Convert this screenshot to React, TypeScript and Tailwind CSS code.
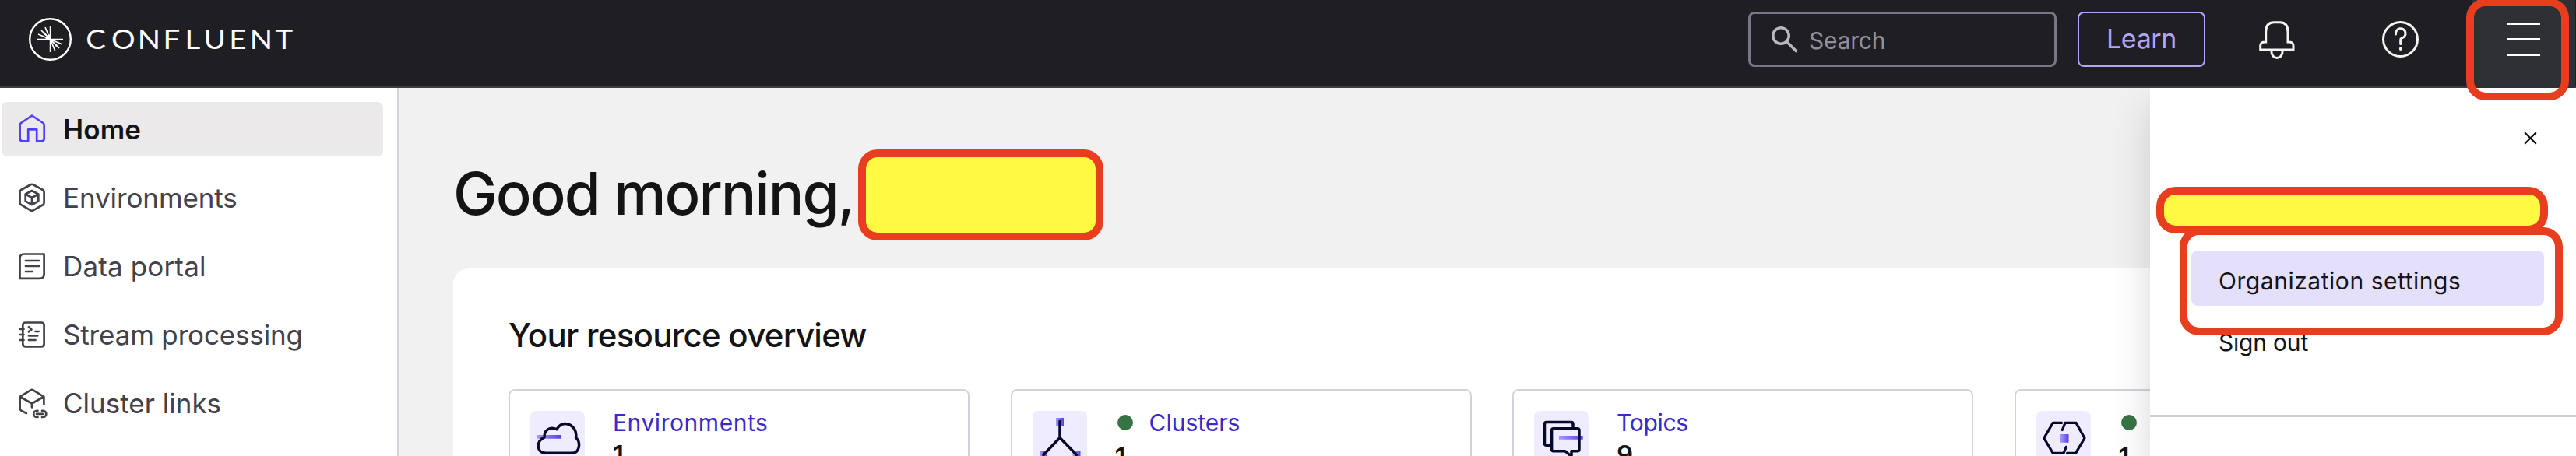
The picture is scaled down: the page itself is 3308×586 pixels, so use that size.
import React from "react";

function NavIcon({ children }: { children: React.ReactNode }) {
  return (
    <svg className="shrink-0" width="40" height="40" viewBox="0 0 40 40" fill="none" stroke="currentColor" strokeWidth="2.7" strokeLinecap="round" strokeLinejoin="round">
      {children}
    </svg>
  );
}

const nav = [
  {
    label: "Environments",
    track: "-mt-px tracking-[-0.1px]",
    icon: (
      <>
        <path d="M18.3 3.2Q20 2.3 21.7 3.2L34 10Q35.6 11 35.6 12.8V26.5Q35.6 28.3 34 29.2L21.7 36.3Q20 37.3 18.3 36.3L6.1 29.2Q4.5 28.3 4.5 26.5V12.8Q4.5 11 6.1 10Z" />
        <path d="M20 11L28.3 15.5V24.5L20 29L11.7 24.5V15.5ZM11.7 15.5L20 20L28.3 15.5M20 20V29" />
      </>
    ),
  },
  {
    label: "Data portal",
    track: "-mt-px tracking-[0.15px]",
    icon: <path d="M4.5 36V10Q4.5 4.5 10 4.5H35.6V30.5Q35.6 35.8 30.3 35.8H4.5M12 13H29M12 20H29M12 27H20.5" />,
  },
  {
    label: "Stream processing",
    track: "-mt-px tracking-[-0.15px]",
    icon: (
      <path d="M12 4.5H32Q35.6 4.5 35.6 8V32Q35.6 35.4 32 35.4H12Q8.3 35.4 8.3 32V8Q8.3 4.5 12 4.5ZM4.5 13H9.5M4.5 20H9.5M4.5 27H9.5M16 10.3L19.5 13.4L16 16.3M24.5 16H28.7M16 21.5H27.2M16 27H24.5" />
    ),
  },
  {
    label: "Cluster links",
    track: "-mt-px",
    icon: (
      <>
        <path d="M12.8 33L6.3 29.6Q4.6 28.6 4.6 26.8V11.8L18.4 3.4Q20 2.4 21.6 3.4L35.4 11.8V21.5M5 12L20 20.5L35 12M20 20.5V25.5" />
        <path d="M27.5 29.8H26.3A4.1 4.1 0 0 0 26.3 38H27.5M33 29.8H34.2A4.1 4.1 0 0 1 34.2 38H33M26 33.9H34" />
      </>
    ),
  },
];

function Tile({ id, children }: { id: string; children: React.ReactNode }) {
  return (
    <svg className="shrink-0 rounded-lg bg-[#f0ecff]" width="70" height="70" viewBox="0 0 70 70" fill="none" stroke="#06082b" strokeWidth="3.5" strokeLinejoin="round" strokeLinecap="round">
      <defs>
        <linearGradient id={id} x1="0" x2="1" y1="0" y2="0">
          <stop offset="0" stopColor="#a59afb" />
          <stop offset="1" stopColor="#5540f2" />
        </linearGradient>
      </defs>
      {children}
    </svg>
  );
}

const cards = [
  {
    id: "environments",
    label: "Environments",
    track: "tracking-[0.55px]",
    count: "1",
    dot: false,
    icon: (
      <Tile id="g-env">
        <path stroke="none" fill="url(#g-env)" d="M8.6 31h30.8v4.8H8.6z" />
        <path d="M18 34C17.6 25 25 19.5 34 23.7C37 18.5 40.5 16.3 45 16.5C54 17 60 25 58.6 34.5C65 40 64 54.3 53 54.3H20C7.5 54.3 7 38 18 34Z" />
      </Tile>
    ),
  },
  {
    id: "clusters",
    label: "Clusters",
    track: "tracking-normal",
    count: "1",
    dot: true,
    icon: (
      <Tile id="g-clu">
        <path stroke="none" fill="url(#g-clu)" d="M30 9h10v10H30z" />
        <path stroke="none" fill="url(#g-clu)" d="M9 51h10v10H9z" />
        <path stroke="none" fill="url(#g-clu)" d="M51.5 51h10v10h-10z" />
        <path d="M35 13.5V34.5L14 56.5M35 34.5L56.5 56.5" />
      </Tile>
    ),
  },
  {
    id: "topics",
    label: "Topics",
    track: "tracking-[-0.3px]",
    count: "9",
    dot: false,
    icon: (
      <Tile id="g-top">
        <path stroke="none" fill="url(#g-top)" d="M32 32h30.7v4.8H32z" />
        <path d="M50 21V17Q50 14.5 47.5 14.5H16Q13.5 14.5 13.5 17V42Q13.5 44.3 16 44.3H21" />
        <path d="M25 22.7H55.5Q58 22.7 58 25V49.5Q58 51.8 55.5 51.8H48V58.5L40 51.8H25Q22.6 51.8 22.6 49.5V25Q22.6 22.7 25 22.7Z" />
      </Tile>
    ),
  },
  {
    id: "links",
    label: "",
    track: "tracking-normal",
    count: "1",
    dot: true,
    icon: (
      <Tile id="g-con">
        <path stroke="none" fill="url(#g-con)" d="M31 30h10.5v10.7H31z" />
        <path strokeWidth="3.2" d="M32.5 15.4H21.3L9.8 35L21.3 54.4H35L38.3 46.3M33.3 24.5L37 15.4H51L62 35L50.5 54.4H39.5" />
      </Tile>
    ),
  },
];

export default function App() {
  return (
    <div className="relative flex h-[586px] w-[3308px] flex-col overflow-hidden bg-[#f1f1f1] font-['Inter',sans-serif] text-[#141416]">
      <header className="relative z-20 flex h-[113px] shrink-0 items-start border-b-2 border-[#3f3c47] bg-[#1f1e23]">
        <svg className="ml-9 mt-[22px] shrink-0" width="350" height="57" viewBox="36 22 350 57" fill="none" stroke="#fff">
          <circle cx="64.5" cy="50.5" r="26.3" strokeWidth="2.4" />
          <path strokeWidth="1.5" d="M64.5 34V67M48 50.5H81" />
          <path strokeWidth="1.7" d="M64.5 50.5L58 35M64.5 50.5L53 39M64.5 50.5L49 44M64.5 50.5L71 66M64.5 50.5L76 62M64.5 50.5L80 57" />
          <path stroke="none" fill="#fff" d="M64.5 50.5L57 41L55 43ZM64.5 50.5L74 58L72 60ZM58 50L64 44L65 51ZM65 57L71 51L64 50Z" />
          <text
            transform="scale(1.08 1)"
            y="63"
            x="102.2 132.3 163.6 194.1 220 242.4 272.4 296.9 327.3"
            fontSize="35.5"
            fontFamily="Lato, sans-serif"
            fill="#fff"
            stroke="none"
          >
            CONFLUENT
          </text>
        </svg>
        <div className="mt-[15px] ml-auto flex h-[71px] w-[396px] items-center rounded-lg border-3 border-[#7a768a] pl-[26px]">
          <svg width="36" height="36" viewBox="0 0 36 36" fill="none" stroke="#b9b8c0" strokeWidth="3.6">
            <circle cx="13" cy="13" r="10.2" />
            <path d="M20.3 20.5L33.5 33.5" />
          </svg>
          <span className="mt-[3px] ml-[13px] text-[30px] leading-9 tracking-[-0.2px] text-[#918ea0]">Search</span>
        </div>
        <div className="mt-[15px] ml-[27px] flex h-[71px] w-[164px] items-center justify-center rounded-lg border-2 border-[#b1a4fb] pb-px text-[34px] leading-10 tracking-[-0.4px] text-[#b1a4fb]">
          Learn
        </div>
        <svg className="mt-[26px] ml-[68px] shrink-0" width="48" height="52" viewBox="0 0 48 52" fill="none" stroke="#f4f4f5" strokeWidth="3">
          <path d="M9.7 28V15Q9.7 2.8 20 2.8H28Q38 2.8 38 15V28Q45 27.5 45 33V38H2.7V33Q2.7 27.5 9.7 28Z" />
          <path d="M17 39V41A7 7.5 0 0 0 31 41V39" />
        </svg>
        <svg className="mt-[26px] ml-[110px] shrink-0" width="49" height="49" viewBox="0 0 49 49" fill="none" stroke="#f4f4f5" strokeWidth="3">
          <circle cx="24.5" cy="24.5" r="22" />
          <path strokeLinecap="round" d="M18.5 18A6.3 6.3 0 1 1 26 23.2Q24.7 23.8 24.7 25.3V30.5" />
          <ellipse cx="24.7" cy="36.7" rx="1.8" ry="2.2" stroke="none" fill="#f4f4f5" />
        </svg>
        <div className="mr-px -mb-0.5 ml-[68px] flex h-[113px] w-[132px] flex-col bg-[#2f3035] pt-[29px] pl-[45px]">
          <div className="flex w-[42px] flex-col gap-[17px]">
            <div className="h-[3px] bg-white" />
            <div className="h-[3px] bg-white" />
            <div className="h-[3px] bg-white" />
          </div>
        </div>
      </header>

      <div className="flex min-h-0 grow">
        <nav className="flex w-[512px] shrink-0 flex-col gap-[18px] border-r-2 border-[#d3d2da] bg-white pt-[18px] pr-[18px] pl-[2px] text-[35px] leading-[44px] text-[#434149]">
          <div className="flex h-[70px] shrink-0 items-center gap-5 rounded-lg bg-[#ebe9ea] pl-[19px] font-semibold text-[#141416]">
            <span className="text-[#5040f5]">
              <NavIcon>
                <path d="M20 2.5L34.3 12Q35.7 13 35.7 14.7V32Q35.7 35.4 32.3 35.4H26.2V20.3H15.2V35.4H8.5Q4.6 35.4 4.6 32V14.7Q4.6 13 6 12Z" />
              </NavIcon>
            </span>
            <span className="tracking-[0.15px]">Home</span>
          </div>
          {nav.map((n) => (
            <div key={n.label} className="flex h-[70px] shrink-0 items-center gap-5 pl-[19px]">
              <NavIcon>{n.icon}</NavIcon>
              <span className={n.track}>{n.label}</span>
            </div>
          ))}
        </nav>

        <main className="flex min-w-0 grow flex-col pl-[70px]">
          <h1 className="mt-[87px] flex h-[96px] items-center text-[76px] leading-[96px] font-medium tracking-[-1.97px]">Good morning,</h1>
          <section className="mt-[49px] flex h-[300px] flex-col rounded-tl-[20px] bg-white pl-[71px]">
            <h2 className="mt-[60px] text-[42px] leading-[52px] font-medium tracking-[-0.73px]">Your resource overview</h2>
            <div className="mt-[43px] flex gap-[52.5px]">
              {cards.map((c) => (
                <div key={c.id} className="flex h-[160px] w-[592px] shrink-0 items-start rounded-lg border-2 border-[#d3d2da] pt-[26px] pl-[26px]">
                  {c.icon}
                  <div className="ml-[36px] flex flex-col">
                    <div className="flex h-[38px] items-center text-[30px] leading-[38px] text-[#3a2bc9]">
                      {c.dot && <span className="mr-[21px] ml-[3px] size-5 -translate-y-1 rounded-full bg-[#377445]" />}
                      <span className={c.track + " -mt-2"}>{c.label}</span>
                    </div>
                    <span className={c.dot ? "mt-px text-[33px] leading-[40px] font-semibold" : "-mt-[2px] text-[33px] leading-[40px] font-semibold"}>{c.count}</span>
                  </div>
                </div>
              ))}
            </div>
          </section>
        </main>
      </div>

      <aside className="absolute top-[113px] right-0 z-10 flex h-[473px] w-[547px] flex-col bg-white shadow-[0_24px_48px_rgba(0,0,0,0.16)]">
        <div className="flex justify-end pt-[56px] pr-[50px]">
          <svg width="17" height="17" viewBox="0 0 17 17" stroke="#141416" strokeWidth="2.3">
            <path d="M1.2 1.2L15.8 15.8M15.8 1.2L1.2 15.8" />
          </svg>
        </div>
        <div className="mt-[136px] mr-[41px] ml-[53px] flex flex-col gap-[9px] text-[30px] leading-9">
          <div className="flex h-[71px] items-center rounded-lg bg-[#e4dffb] pt-[6px] pl-[35px] tracking-[0.54px]">Organization settings</div>
          <div className="flex h-[71px] items-center pt-[5px] pl-[35px] tracking-[-0.2px]">Sign out</div>
        </div>
        <div className="mt-[60px] h-[3px] shrink-0 bg-[#d0cfd8]" />
      </aside>

      <div className="absolute top-[192px] left-[1102px] z-30 h-[117px] w-[315px] rounded-[25px] border-10 border-[#e83e1f] bg-[#fdfa41]" />
      <div className="absolute top-[-2px] left-[3167px] z-30 h-[131px] w-[132px] rounded-[25px] border-10 border-[#e83e1f]" />
      <div className="absolute top-[240px] left-[2769px] z-30 h-[60px] w-[503px] rounded-[25px] border-10 border-[#e83e1f] bg-[#fdfa41]" />
      <div className="absolute top-[292px] left-[2799px] z-30 h-[139px] w-[492px] rounded-[25px] border-10 border-[#e83e1f]" />
    </div>
  );
}
